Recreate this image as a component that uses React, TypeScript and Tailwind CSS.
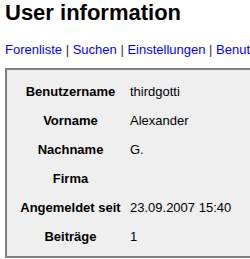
const rows: [string, string][] = [
  ['Benutzername', 'thirdgotti'],
  ['Vorname', 'Alexander'],
  ['Nachname', 'G.'],
  ['Firma', ''],
  ['Angemeldet seit', '23.09.2007 15:40'],
  ['Beiträge', '1'],
];

function App() {
  return (
    <div className="w-[250px] h-[259px] overflow-hidden bg-white pl-[5px] text-black font-['Liberation_Sans',Arial,sans-serif]">
      <h1 className="text-[22px] leading-[25px] font-bold">User information</h1>

      <nav className="mt-[17px] text-[13px] leading-[15px] whitespace-nowrap">
        <a className="text-[#0000ff]">Forenliste</a>
        <span className="text-[#333]"> | </span>
        <a className="text-[#0000ff]">Suchen</a>
        <span className="text-[#333]"> | </span>
        <a className="text-[#0000ff]">Einstellungen</a>
        <span className="text-[#333]"> | </span>
        <a className="text-[#0000ff]">Benutzerliste</a>
      </nav>

      <div className="mt-[11px] w-[400px] h-[190px] border-2 border-[#808080] bg-[#efefef] pt-[7px] pl-[12px]">
        <div className="grid grid-cols-[103px_1fr] gap-x-[8px] text-[13px] leading-[15px]">
          {rows.map(([label, value]) => (
            <div key={label} className="contents">
              <div className="py-[7px] text-center font-bold whitespace-nowrap">{label}</div>
              <div className="py-[7px] whitespace-nowrap">{value}</div>
            </div>
          ))}
        </div>
      </div>
    </div>
  );
}

export default App;
